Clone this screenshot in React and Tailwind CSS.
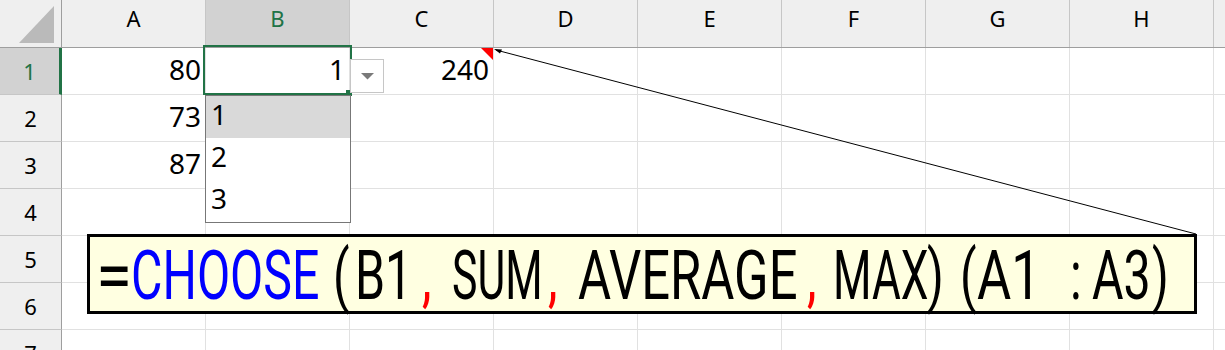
import React from 'react'

const COLS = ['A', 'B', 'C', 'D', 'E', 'F', 'G', 'H', '']

const ROWS = [
  { n: 1, cells: { A: '80', B: '1', C: '240' } },
  { n: 2, cells: { A: '73' } },
  { n: 3, cells: { A: '87' } },
  { n: 4, cells: {} },
  { n: 5, cells: {} },
  { n: 6, cells: {} },
  { n: 7, cells: {} },
]

const HeaderRow = () => (
  <div className="flex h-[48px] border-b border-[#9e9e9e] bg-[#efefef]">
    <div className="w-[62px] shrink-0 border-r border-[#9e9e9e]">
      <svg className="block" width="61" height="47">
        <polygon points="19,43 54,43 54,6" fill="#bababa" />
      </svg>
    </div>
    {COLS.map((c, i) => (
      <div
        key={i}
        className={`flex w-[144px] shrink-0 items-center justify-center border-r border-[#c6c6c6] pb-3 text-[22px] leading-none ${
          c === 'B' ? 'bg-[#d2d2d2] text-[#217346]' : 'text-black'
        }`}
      >
        {c}
      </div>
    ))}
  </div>
)

const Row = ({ row }) => {
  const selected = row.n === 1
  return (
    <div className="flex h-[47px]">
      <div
        className={`flex w-[62px] shrink-0 items-center justify-center border-b border-b-[#c6c6c6] text-[22px] leading-none ${
          selected
            ? 'border-r-[3px] border-r-[#217346] bg-[#d2d2d2] text-[#217346]'
            : 'border-r border-r-[#9e9e9e] bg-[#efefef] text-black'
        }`}
      >
        {row.n}
      </div>
      {COLS.map((c, i) => (
        <div
          key={i}
          className="flex w-[144px] shrink-0 items-center justify-end border-r border-b border-[#e1e1e1] pr-1 pb-1 text-[28px] leading-none text-black"
        >
          {row.cells[c] || ''}
        </div>
      ))}
    </div>
  )
}

const Seg = ({ w, color = 'text-black', scale = 'scale-x-[0.7]', children }) => (
  <span className={`block shrink-0 whitespace-nowrap ${w} ${color}`}>
    <span className={`inline-block origin-left ${scale}`}>{children}</span>
  </span>
)

export default function App() {
  return (
    <div className="relative h-[350px] w-[1225px] overflow-hidden bg-white font-['Noto_Sans',sans-serif]">
      <HeaderRow />
      {ROWS.map((r) => (
        <Row key={r.n} row={r} />
      ))}

      {/* comment indicator on C1 */}
      <svg className="absolute left-[481px] top-[48px]" width="12" height="12">
        <polygon points="0,0 12,0 12,12" fill="#ff0000" />
      </svg>

      {/* selection on B1 */}
      <div className="absolute left-[203px] top-[45px] h-[50px] w-[149px] border-2 border-[#217346]" />
      <div className="absolute left-[346px] top-[90px] h-[6px] w-[6px] bg-[#217346]" />

      {/* dropdown button */}
      <div className="absolute left-[350px] top-[59px] flex h-[34px] w-[34px] items-center justify-center border border-[#c6c6c6] bg-white">
        <svg width="13" height="7">
          <polygon points="0,0 13,0 6.5,6.5" fill="#7a7a7a" />
        </svg>
      </div>

      {/* dropdown list */}
      <div className="absolute left-[205px] top-[95px] flex h-[128px] w-[146px] flex-col border border-[#777777] bg-white text-[28px] leading-none text-black">
        <div className="flex h-[42px] items-center bg-[#d9d9d9] pl-[5px] pb-[6px]">1</div>
        <div className="flex h-[42px] items-center pl-[5px] pb-[6px]">2</div>
        <div className="flex h-[42px] items-center pl-[5px] pb-[6px]">3</div>
      </div>

      {/* comment arrow */}
      <svg className="pointer-events-none absolute left-0 top-0" width="1225" height="350">
        <line x1="1196" y1="234" x2="496" y2="50" stroke="#000" strokeWidth="1" />
        <polygon points="494,49 502,49.5 500,53.5" fill="#000" />
      </svg>

      {/* comment box */}
      <div className="absolute left-[87px] top-[234px] flex h-[80px] w-[1110px] items-center border-[3px] border-black bg-[#ffffe1] pl-[6px] pt-[3px] font-['Roboto',sans-serif] text-[69px] font-normal leading-none">
        <Seg w="w-[35px]" scale="scale-x-[0.95]">=</Seg>
        <Seg w="w-[202px]" color="text-[#0000ff]">CHOOSE</Seg>
        <Seg w="w-[22px]">(</Seg>
        <Seg w="w-[67px]">B1</Seg>
        <Seg w="w-[30px]" color="text-[#ff0000]">,</Seg>
        <Seg w="w-[96px]" scale="scale-x-[0.62]">SUM</Seg>
        <Seg w="w-[30px]" color="text-[#ff0000]">,</Seg>
        <Seg w="w-[229px]" scale="scale-x-[0.735]">AVERAGE</Seg>
        <Seg w="w-[26px]" color="text-[#ff0000]">,</Seg>
        <Seg w="w-[94px]" scale="scale-x-[0.64]">MAX</Seg>
        <Seg w="w-[33px]">)</Seg>
        <Seg w="w-[17px]">(</Seg>
        <Seg w="w-[93px]" scale="scale-x-[0.76]">A1</Seg>
        <Seg w="w-[22px]">:</Seg>
        <Seg w="w-[60px]">A3</Seg>
        <Seg w="w-[30px]">)</Seg>
      </div>
    </div>
  )
}
